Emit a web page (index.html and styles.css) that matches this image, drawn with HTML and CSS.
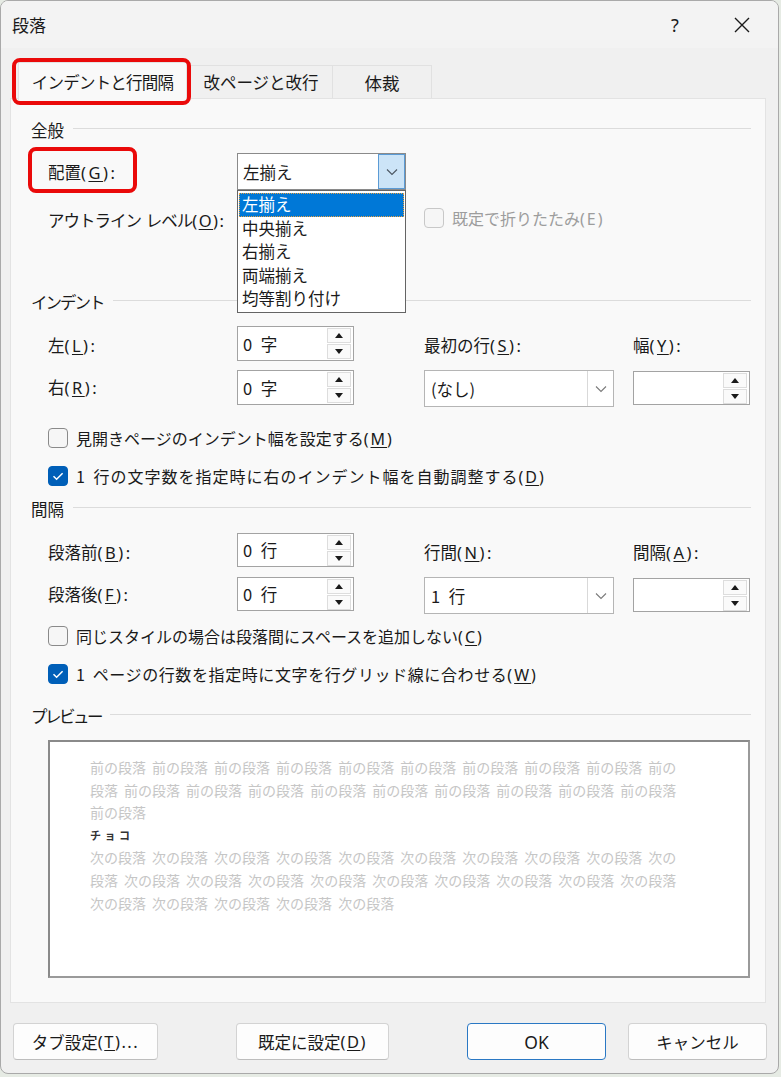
FILE: index.html
```html
<!DOCTYPE html>
<html lang="ja">
<head>
<meta charset="utf-8">
<title>段落</title>
<link rel="stylesheet" href="styles.css">
</head>
<body>
<div class="dialog">
  <div class="titlebar">
    <span class="title">段落</span>
    <span class="help">?</span>
    <span class="close"><svg width="18" height="18" viewBox="0 0 18 18"><path d="M2 2 L16 16 M16 2 L2 16" stroke="#1a1a1a" stroke-width="1.4" fill="none"/></svg></span>
  </div>

  <div class="tabs">
    <div class="tab active">インデントと行間隔</div>
    <div class="tab tab2">改ページと改行</div>
    <div class="tab tab3">体裁</div>
    <div class="hl hl-tab"></div>
  </div>

  <div class="panel">
    <div class="ghead">全般</div>
    <div class="row row-align">
      <div class="lbl">配置<span class="m">(<u>G</u>):</span></div>
      <div class="combo combo-open">
        <span class="cval">左揃え</span>
        <span class="cbtn"><svg width="12" height="8" viewBox="0 0 12 8"><path d="M1 1.5 L6 6.5 L11 1.5" stroke="#4a5560" stroke-width="1.1" fill="none"/></svg></span>
        <ul class="dropdown">
          <li class="sel">左揃え</li>
          <li>中央揃え</li>
          <li>右揃え</li>
          <li>両端揃え</li>
          <li>均等割り付け</li>
        </ul>
      </div>
      <div class="hl hl-cfg"></div>
    </div>
    <div class="row row-outline">
      <div class="lbl lbl-wide"><span class="kn">アウトライン レベル</span><span class="m">(<u>O</u>):</span></div>
      <div class="chk chk-inline disabled"><span class="box"></span><span>既定で折りたたみ<span class="m">(E)</span></span></div>
    </div>

    <div class="ghead ghead-indent"><span class="kn2">インデント</span></div>
    <div class="grid grid-indent">
      <div class="lbl lbl-a">左<span class="m">(<u>L</u>):</span></div>
      <div class="spin spin-a"><span class="val">0 字</span><span class="arrows"><span class="up"></span><span class="dn"></span></span></div>
      <div class="lbl lbl-a lbl-r">最初の行<span class="m">(<u>S</u>):</span></div>
      <div class="lbl lbl-a lbl-r">幅<span class="m">(<u>Y</u>):</span></div>
      <div class="lbl">右<span class="m">(<u>R</u>):</span></div>
      <div class="spin"><span class="val">0 字</span><span class="arrows"><span class="up"></span><span class="dn"></span></span></div>
      <div class="combo combo-wide"><span class="cval">(なし)</span><span class="cdiv"><svg width="12" height="8" viewBox="0 0 12 8"><path d="M1 1.5 L6 6.5 L11 1.5" stroke="#7a7a7a" stroke-width="1.1" fill="none"/></svg></span></div>
      <div class="spin spin-s"><span class="val"></span><span class="arrows"><span class="up"></span><span class="dn"></span></span></div>
    </div>
    <div class="chk chk-1"><span class="box"></span><span>見開きページのインデント幅を設定する<span class="m">(<u>M</u>)</span></span></div>
    <div class="chk chk-2"><span class="box on"><svg width="20" height="20" viewBox="0 0 20 20"><path d="M5.5 10.2 L8.6 13.2 L14.6 7.2" stroke="#fff" stroke-width="1.5" fill="none"/></svg></span><span class="wide1">1 行の文字数を指定時に右のインデント幅を自動調整する<span class="m">(<u>D</u>)</span></span></div>

    <div class="ghead ghead-space">間隔</div>
    <div class="grid grid-space">
      <div class="lbl lbl-a">段落前<span class="m">(<u>B</u>):</span></div>
      <div class="spin spin-b"><span class="val">0 行</span><span class="arrows"><span class="up"></span><span class="dn"></span></span></div>
      <div class="lbl lbl-a lbl-r">行間<span class="m">(<u>N</u>):</span></div>
      <div class="lbl lbl-a lbl-r">間隔<span class="m">(<u>A</u>):</span></div>
      <div class="lbl">段落後<span class="m">(<u>F</u>):</span></div>
      <div class="spin spin-b"><span class="val">0 行</span><span class="arrows"><span class="up"></span><span class="dn"></span></span></div>
      <div class="combo combo-wide"><span class="cval">1 行</span><span class="cdiv"><svg width="12" height="8" viewBox="0 0 12 8"><path d="M1 1.5 L6 6.5 L11 1.5" stroke="#7a7a7a" stroke-width="1.1" fill="none"/></svg></span></div>
      <div class="spin spin-s"><span class="val"></span><span class="arrows"><span class="up"></span><span class="dn"></span></span></div>
    </div>
    <div class="chk chk-3"><span class="box"></span><span>同じスタイルの場合は段落間にスペースを追加しない<span class="m">(<u>C</u>)</span></span></div>
    <div class="chk chk-4"><span class="box on"><svg width="20" height="20" viewBox="0 0 20 20"><path d="M5.5 10.2 L8.6 13.2 L14.6 7.2" stroke="#fff" stroke-width="1.5" fill="none"/></svg></span><span class="wide2">1 ページの行数を指定時に文字を行グリッド線に合わせる<span class="m">(<u>W</u>)</span></span></div>

    <div class="ghead ghead-prev"><span class="kn3">プレビュー</span></div>
    <div class="preview">
      <div class="pl">前の段落 前の段落 前の段落 前の段落 前の段落 前の段落 前の段落 前の段落 前の段落 前の</div>
      <div class="pl">段落 前の段落 前の段落 前の段落 前の段落 前の段落 前の段落 前の段落 前の段落 前の段落</div>
      <div class="pl">前の段落</div>
      <div class="pl cur">チョコ</div>
      <div class="pl">次の段落 次の段落 次の段落 次の段落 次の段落 次の段落 次の段落 次の段落 次の段落 次の</div>
      <div class="pl">段落 次の段落 次の段落 次の段落 次の段落 次の段落 次の段落 次の段落 次の段落 次の段落</div>
      <div class="pl">次の段落 次の段落 次の段落 次の段落 次の段落</div>
    </div>
  </div>

  <div class="btns">
    <div class="btn btn-tab">タブ設定<span class="m">(<u>T</u>)...</span></div>
    <div class="btn btn-def">既定に設定<span class="m">(<u>D</u>)</span></div>
    <div class="btn btn-ok">OK</div>
    <div class="btn btn-cancel">キャンセル</div>
  </div>
</div>
</body>
</html>
```

FILE: styles.css
```css
* { box-sizing: border-box; }
html, body { margin: 0; padding: 0; }
body {
  background: #e6ebe4;
  font-family: "Noto Sans CJK JP", "Noto Sans", sans-serif;
  font-size: 16px;
  color: #1a1a1a;
  word-spacing: 3px;
  width: 781px;
  height: 1077px;
  overflow: hidden;
}
u { text-decoration: underline; text-underline-offset: 2px; text-decoration-thickness: 1px; }
.m {
  font-family: "Noto Sans", "Noto Sans CJK JP", sans-serif;
  letter-spacing: 2.5px;
}
.kn { letter-spacing: -1px; word-spacing: 2px; }
.kn2 { letter-spacing: -2px; }
.kn3 { letter-spacing: -2.5px; }

.dialog {
  width: 779px;
  height: 1074px;
  background: #f0f0f0;
  border: 1px solid #a9a9a9;
  border-radius: 8px;
  overflow: hidden;
}

.titlebar {
  height: 47px;
  background: #f3f3f3;
  display: flex;
  align-items: center;
  padding-left: 11px;
}
.title { font-size: 17px; flex: 1; }
.help { font-size: 18px; width: 60px; margin-right: 16px; text-align: center; font-family: "Noto Sans", sans-serif; }
.close { width: 42px; margin-right: 15px; display: flex; justify-content: center; }

.tabs {
  position: relative;
  margin-top: 14px;
  height: 36px;
  display: flex;
  align-items: flex-end;
  padding-left: 17px;
  z-index: 2;
}
.tab {
  height: 33px;
  display: flex;
  align-items: center;
  justify-content: center;
  border: 1px solid #e1e1e1;
  border-bottom: none;
  background: #f0f0f0;
  font-size: 16.5px;
}
.tab.active {
  width: 169px;
  height: 38px;
  margin-bottom: -2px;
  background: #f9f9f9;
  border-color: #e3e3e3;
  letter-spacing: -0.8px;
}
.tab2 { width: 144px; margin-left: 2px; }
.tab3 { width: 99px; border-left: none; font-size: 17.5px; }

.hl {
  position: absolute;
  border: 4px solid #ea0a0a;
  border-radius: 8px;
  pointer-events: none;
}
.hl-tab { left: 11px; top: -4px; width: 179px; height: 47px; }

.panel {
  margin-left: 9px;
  width: 756px;
  height: 905px;
  background: #f9f9f9;
  border: 1px solid #e3e3e3;
  padding: 19px 14px 0 20px;
  position: relative;
  z-index: 1;
}

.ghead {
  height: 24px;
  display: flex;
  align-items: center;
  font-size: 16.5px;
}
.ghead::after {
  content: "";
  flex: 1;
  height: 1px;
  background: #dcdcdc;
  margin-left: 9px;
  margin-top: -4px;
}
.ghead-indent { margin-top: 54px; }
.ghead-space { margin-top: 6px; }
.ghead-prev { margin-top: 15px; }

.row { display: flex; position: relative; }
.row-align { margin-top: 11px; height: 37px; align-items: center; }
.row-align .lbl { width: 206px; padding-left: 17px; }
.hl-cfg { left: -3px; top: -6px; width: 109px; height: 46px; }

.row-outline { margin-top: 14px; height: 32px; align-items: center; }
.lbl-wide { width: 393px; padding-left: 17px; }
.lbl-wide .m { letter-spacing: 1.5px; }

.combo {
  position: relative;
  background: #fff;
  border: 1px solid #a0a0a0;
  display: flex;
  align-items: center;
}
.combo-open { width: 169px; height: 37px; border-color: #8a8a8a; }
.cval { flex: 1; padding-left: 5px; font-size: 16.5px; }
.cbtn {
  width: 27px;
  height: 35px;
  background: #cce4f7;
  border: 1px solid #5b9bd5;
  display: flex;
  align-items: center;
  justify-content: center;
}
.dropdown {
  position: absolute;
  left: -1px;
  top: 36px;
  width: 169px;
  height: 123px;
  margin: 0;
  padding: 2px 1px 0 1px;
  list-style: none;
  background: #fff;
  border: 1px solid #646464;
  z-index: 5;
}
.dropdown li {
  height: 23.6px;
  line-height: 23px;
  padding-left: 3px;
  font-size: 16.5px;
}
.dropdown li.sel {
  background: #0078d7;
  color: #fff;
  outline: 1px dotted #e8a040;
  outline-offset: -1px;
}

.grid {
  display: grid;
  grid-template-columns: 206px 187px 209px 117px;
  grid-template-rows: 44px 37px;
  margin-top: 12px;
}
.lbl { font-size: 16.5px; white-space: nowrap; }
.grid .lbl { height: 35px; line-height: 35px; padding-left: 17px; }
.grid .lbl-a { padding-top: 3px; line-height: 32px; height: 35px; }
.grid .lbl-r { padding-left: 0; }

.spin {
  width: 117px;
  height: 35px;
  background: #fff;
  border: 1px solid #a3a3a3;
  display: flex;
  align-items: center;
  padding: 0 2px 0 5px;
}
.spin-b { height: 34px; }
.spin-s { height: 34px; margin-top: 1px; }
.val { flex: 1; font-size: 16.5px; word-spacing: 5px; }
.arrows {
  display: flex;
  flex-direction: column;
  gap: 1px;
  width: 24px;
}
.up, .dn {
  height: 15px;
  border: 1px solid #dddddd;
  background: #fafafa;
  display: flex;
  align-items: center;
  justify-content: center;
}
.up::before {
  content: "";
  border-left: 4.5px solid transparent;
  border-right: 4.5px solid transparent;
  border-bottom: 5px solid #1a1a1a;
}
.dn::before {
  content: "";
  border-left: 4.5px solid transparent;
  border-right: 4.5px solid transparent;
  border-top: 5px solid #1a1a1a;
}

.combo-wide { width: 190px; height: 37px; border-color: #b5b5b5; }
.combo-wide .cval { padding-left: 6px; word-spacing: 5px; }
.cdiv {
  width: 26px;
  height: 35px;
  border-left: 1px solid #d9d9d9;
  display: flex;
  align-items: center;
  justify-content: center;
}

.chk {
  display: flex;
  align-items: center;
  height: 30px;
  padding-left: 17px;
  gap: 8px;
  font-size: 16px;
  white-space: nowrap;
}
.chk-inline { padding-left: 0; margin-top: -4px; }
.chk-1 { margin-top: 16px; }
.chk-2 { margin-top: 8px; }
.chk-3 { margin-top: 7px; }
.chk-4 { margin-top: 8px; }
.chk .m { letter-spacing: 2px; }
.wide1 { letter-spacing: 1px; }
.wide2 { letter-spacing: 0.6px; }
.box {
  width: 20px;
  height: 20px;
  border: 1px solid #8a8a8a;
  border-radius: 4px;
  background: #f6f6f6;
  flex: none;
  display: flex;
}
.box.on {
  background: #005fb8;
  border-color: #005fb8;
}
.box.on svg { margin: -1px; }
.disabled { color: #9d9d9d; }
.disabled .box { border-color: #c8c8c8; background: #f6f6f6; }

.preview {
  margin-top: 12px;
  margin-left: 17px;
  width: 702px;
  height: 238px;
  background: #fff;
  border: 2px solid #8a8a8a;
  border-right-color: #9a9a9a;
  border-bottom-color: #9a9a9a;
  padding: 14px 0 0 40px;
}
.pl {
  height: 22.6px;
  line-height: 22.6px;
  font-size: 14px;
  color: #c6c6c6;
  white-space: pre;
  word-spacing: 2.9px;
}
.pl.cur {
  font-size: 11px;
  font-weight: bold;
  color: #333;
  letter-spacing: 3.5px;
}

.btns {
  display: flex;
  margin-top: 20px;
  padding-left: 12px;
  gap: 22px;
}
.btn {
  height: 37px;
  background: #fdfdfd;
  border: 1px solid #d3d3d3;
  border-bottom-color: #bdbdbd;
  border-radius: 4px;
  display: flex;
  align-items: center;
  justify-content: center;
  font-size: 16.5px;
}
.btn .m { letter-spacing: 1.5px; }
.btn-tab { width: 145px; margin-right: 56px; }
.btn-def { width: 153px; margin-right: 56px; }
.btn-ok { width: 139px; border: 1.5px solid #2a78c4; font-family: "Noto Sans", sans-serif; font-size: 17.5px; }
.btn-cancel { width: 139px; }
```
